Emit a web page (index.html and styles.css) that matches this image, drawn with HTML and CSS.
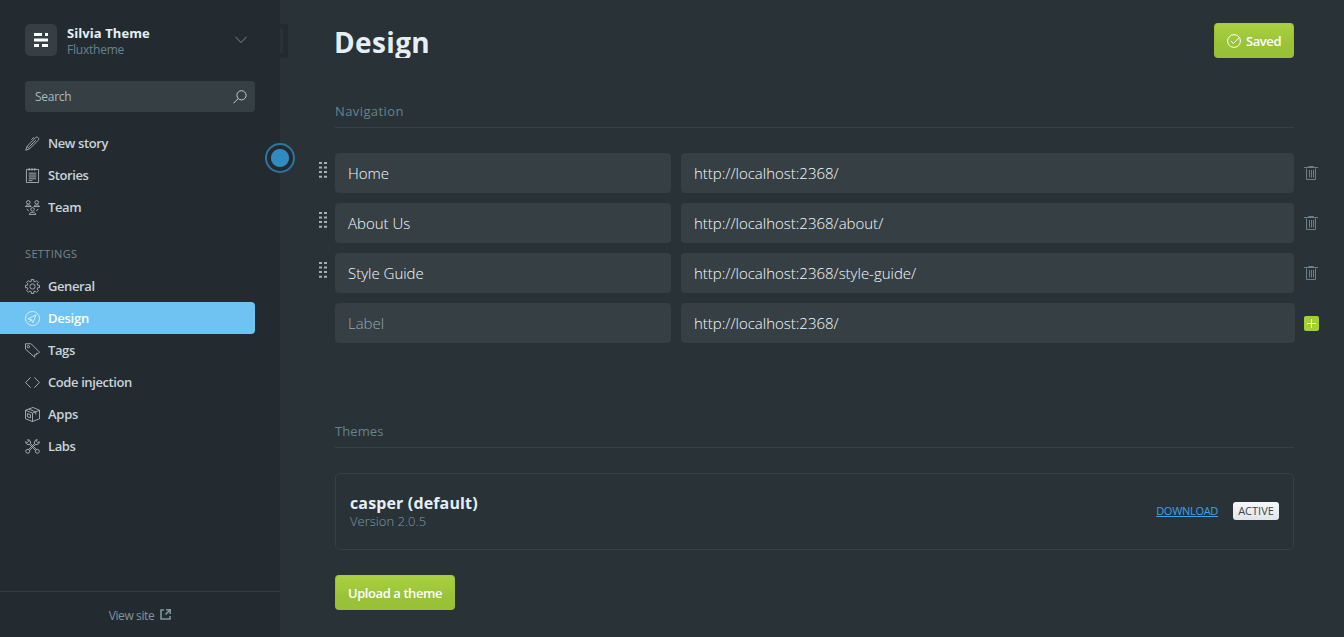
FILE: index.html
```html
<!DOCTYPE html>
<html lang="en">
<head>
<meta charset="utf-8">
<title>Design - Silvia Theme</title>
<link rel="stylesheet" href="styles.css">
</head>
<body>
<svg class="defs" width="0" height="0">
  <symbol id="trash" viewBox="0 0 14 16"><path d="M2.500 3.500V14.500H11.500V3.500M0 2.500H14M4.500 2V1.500H9.500V2M5.500 5V12.500M7.500 5V12.500M9.500 5V12.500"/></symbol>
  <symbol id="grip" viewBox="0 0 9 17"><path d="M0 0h3v2H0zM5 0h3v2H5zM0 4.500h3v2H0zM5 4.500h3v2H5zM0 9h3v2H0zM5 9h3v2H5zM0 13.800h3v2H0zM5 13.800h3v2H5z"/></symbol>
</svg>
<div class="app">
  <aside class="sidebar">
    <header class="account">
      <span class="logo"><svg width="14" height="14" viewBox="0 0 14 14"><path d="M0 0h8v3H0zM11 0h3v3h-3zM0 5.500h14v3H0zM0 11h5v3H0zM8 11h6v3H8z"/></svg></span>
      <div class="who"><div class="blog">Silvia Theme</div><div class="user">Fluxtheme</div></div>
      <svg class="chevron" width="12" height="8" viewBox="0 0 12 8"><path d="M.5 .8L6 6.600L11.500 .8"/></svg>
    </header>
    <div class="search"><span>Search</span><svg width="14" height="14" viewBox="0 0 14 14"><circle cx="8.500" cy="5.300" r="4.600"/><path d="M5.200 8.600L.5 13.300"/></svg></div>
    <nav class="menu">
      <a class="item"><svg class="ico" viewBox="0 0 16 16"><path d="M.8 15.200L2.200 11 11.300 1.700C12 1 13.200 1 14 1.800 14.800 2.600 14.900 3.600 14.200 4.400L5 13.600ZM2.200 11L5 13.600M4.500 11.500L11.500 4.500M7 3.800L9.500 1.300"/></svg><span>New story</span></a>
      <a class="item"><svg class="ico" viewBox="0 0 16 16"><path d="M1.500 1.500H14.500V15.500H1.500ZM4.500 0V3M7.500 0V3M10.500 0V3M4 5.500H12M4 7.500H12M4 9.500H12M4 11.500H12M4 13.500H8"/></svg><span>Stories</span></a>
      <a class="item"><svg class="ico" viewBox="0 0 16 16"><circle cx="3.500" cy="2.500" r="1.900"/><circle cx="12.500" cy="2.500" r="1.900"/><circle cx="8" cy="10" r="1.900"/><path d="M.5 7C.5 4.800 6.500 4.800 6.500 7ZM9.500 7C9.500 4.800 15.500 4.800 15.500 7ZM4.500 15.500C4.500 12.500 11.500 12.500 11.500 15.500ZM2 9.500L4 12M14 9.500L12 12"/></svg><span>Team</span></a>
      <h2 class="group">SETTINGS</h2>
      <a class="item"><svg class="ico" viewBox="0 0 16 16"><circle cx="8" cy="8" r="2.800"/><path d="M6.700 .5H9.300V2.500L10.800 3.100 12.300 1.800 14.200 3.700 12.900 5.200 13.500 6.700H15.500V9.300H13.500L12.900 10.800 14.200 12.300 12.300 14.200 10.800 12.900 9.300 13.500V15.500H6.700V13.500L5.200 12.900 3.700 14.200 1.800 12.300 3.100 10.800 2.500 9.300H.5V6.700H2.500L3.100 5.200 1.800 3.700 3.700 1.800 5.200 3.100 6.700 2.500Z"/></svg><span>General</span></a>
      <a class="item active"><svg class="ico" viewBox="0 0 16 16"><circle cx="8" cy="8" r="7.500"/><path d="M11.800 4L3.200 8.400 6.800 9.200 8.300 12.500ZM6.800 9.200L4.800 11.400"/></svg><span>Design</span></a>
      <a class="item"><svg class="ico" viewBox="0 0 16 16"><path d="M.5 .8L6.500 .8 15.500 9.800 14 11.300 12.500 10.800 12.200 12.600 10.300 12.500 10.300 15.200 .5 6.500Z"/><circle cx="3.600" cy="3.900" r="1.200"/></svg><span>Tags</span></a>
      <a class="item"><svg class="ico" viewBox="0 0 16 16"><path d="M6 2.500L.6 8 6 13.500M10 2.500L15.400 8 10 13.500"/></svg><span>Code injection</span></a>
      <a class="item"><svg class="ico" viewBox="0 0 16 16"><path d="M.5 3.500L8.500 .5 15.500 3.500V12.500L8 15.500.5 12.500ZM.5 3.500L8 6.500 15.500 3.500M8 6.500V15.500M4 2.200L11.500 5.200V8M2.500 7L5.800 8.300V11.500L2.500 10.300Z"/></svg><span>Apps</span></a>
      <a class="item"><svg class="ico" viewBox="0 0 16 16"><path d="M5.800 4.800L12.200 11.200M4.800 5.800L11.200 12.200M10.200 4.800L3.800 11.200M11.200 5.800L4.800 12.200M2.800 .8L4 2.500 2.500 4 .8 2.800C.2 4.600 2.500 6.600 4.800 5.800L5.800 4.800C6.600 2.500 4.600.2 2.800 .8M13.200 .8L12 2.500 13.500 4 15.200 2.800C15.800 4.600 13.500 6.600 11.200 5.800L10.200 4.800C9.400 2.500 11.400.2 13.200 .8"/><circle cx="2.900" cy="13.100" r="2.100"/><circle cx="13.100" cy="13.100" r="2.100"/></svg><span>Labs</span></a>
    </nav>
    <footer class="view"><span>View site</span><svg width="11" height="11" viewBox="0 0 11 11"><path d="M4 1H1V10H10V7"/><path d="M6 .8H10.200V5M10 1L5.500 5.500"/></svg></footer>
    <span class="edge-tab"></span>
    <span class="marker"></span>
  </aside>
  <main class="main">
    <header class="top"><h1>Design</h1><button class="btn saved"><svg width="14" height="14" viewBox="0 0 14 14"><circle cx="7" cy="7" r="6.400"/><path d="M3.800 7L6.400 9.500 12 3.800"/></svg><span>Saved</span></button></header>
    <h3 class="section">Navigation</h3>
    <div class="rows">
      <div class="row"><svg class="grip"><use href="#grip"/></svg><div class="field label">Home</div><div class="field url">http://localhost:2368/</div><svg class="trash"><use href="#trash"/></svg></div>
      <div class="row"><svg class="grip"><use href="#grip"/></svg><div class="field label">About Us</div><div class="field url">http://localhost:2368/about/</div><svg class="trash"><use href="#trash"/></svg></div>
      <div class="row"><svg class="grip"><use href="#grip"/></svg><div class="field label">Style Guide</div><div class="field url">http://localhost:2368/style-guide/</div><svg class="trash"><use href="#trash"/></svg></div>
      <div class="row new"><span class="grip"></span><div class="field label empty">Label</div><div class="field url">http://localhost:2368/</div><span class="add"><svg width="15" height="15" viewBox="0 0 15 15"><path d="M7.500 3V12M3 7.500H12"/></svg></span></div>
    </div>
    <h3 class="section themes">Themes</h3>
    <section class="card">
      <div class="theme"><div class="name">casper (default)</div><div class="version">Version 2.0.5</div></div>
      <a class="download">DOWNLOAD</a><span class="badge">ACTIVE</span>
    </section>
    <button class="btn upload"><span>Upload a theme</span></button>
  </main>
</div>
</body>
</html>
```
FILE: styles.css
```css
* { box-sizing: border-box; }
body { margin: 0; background: #283237; font-family: "Open Sans", "Noto Sans", sans-serif; color: #e5eff5; }
svg { fill: none; stroke: currentColor; flex: none; }
h1, h2, h3 { margin: 0; }
.defs { position: absolute; }
.app { display: flex; height: 637px; overflow: hidden; }

.sidebar { position: relative; display: flex; flex-direction: column; width: 280px; flex: none; background: #232b31; }
.account { display: flex; align-items: center; height: 32px; margin: 24px 33px 0 25px; }
.logo { display: flex; align-items: center; justify-content: center; width: 32px; height: 32px; border-radius: 5px; background: #353f44; }
.logo svg { fill: #fff; stroke: none; }
.who { flex: 1; padding: 3px 0 0 10px; white-space: nowrap; }
.blog { font-size: 13px; line-height: 16px; font-weight: 700; letter-spacing: .08px; }
.user { font-size: 12px; line-height: 17px; color: #66838f; letter-spacing: -.22px; }
.chevron { color: #738a94; }
.search { display: flex; align-items: center; justify-content: space-between; height: 31px; margin: 25px 25px 0; padding: 0 8px 0 10px; border-radius: 4px; background: #353f44; font-size: 12px; color: #a9b9c1; letter-spacing: -.28px; }
.search svg { color: #c0cdd4; }
.menu { margin-top: 15px; }
.item { display: flex; align-items: center; gap: 8px; width: 255px; height: 32px; padding-left: 25px; font-size: 13px; font-weight: 600; color: #c8d3da; letter-spacing: -.4px; }
.item:nth-of-type(8), .active { letter-spacing: -.25px; }
.ico { width: 15px; height: 15px; stroke-width: .9; color: #b4bfc6; }
.active { border-radius: 0 4px 4px 0; background: #6ec3f2; color: #fff; }
.active .ico { color: #e8f6ff; }
.group { height: 47px; padding: 22px 0 0 25px; font-size: 11px; line-height: 18px; font-weight: 400; color: #77858c; letter-spacing: .35px; }
.view { display: flex; align-items: center; justify-content: center; gap: 6px; height: 46px; padding-top: 2px; margin-top: auto; border-top: 1px solid #303d44; font-size: 12px; font-weight: 400; color: #7f959f; letter-spacing: -.4px; }
.view svg { stroke-width: 1.600; margin-top: -3px; }
.edge-tab { position: absolute; left: 280px; top: 24px; width: 8px; height: 34px; border: solid #232b31; border-width: 5px 5px 5px 0; border-radius: 0 3px 3px 0; }
.marker { position: absolute; left: 265px; top: 143px; width: 30px; height: 30px; border: 2px solid #2f769e; border-radius: 50%; background: radial-gradient(circle, #318bbf 0 8.500px, #222b31 9.500px); }

.main { width: 1014px; padding: 23px 0 0 55px; }
.top { display: flex; justify-content: space-between; height: 35px; }
h1 { font-size: 28px; line-height: 39px; font-weight: 700; height: 35px; overflow: hidden; letter-spacing: .35px; margin-left: -1px; }
.btn { display: flex; align-items: center; justify-content: center; height: 35px; padding: 0; border: 1px solid #9abf35; border-top-color: #a6ce3d; border-radius: 4px; background: linear-gradient(#a9d140, #9ac338 60%, #99c137); font: 600 13px "Open Sans", sans-serif; color: #fff; }
.saved { width: 80px; gap: 5px; letter-spacing: -.4px; }
.section { height: 28px; margin-top: 42px; border-bottom: 1px solid #364248; font-size: 13px; line-height: 22px; font-weight: 400; color: #668490; letter-spacing: .4px; }
.section.themes { letter-spacing: .1px; }
.rows { display: flex; flex-direction: column; gap: 10px; margin: 25px -26px 0 -16px; }
.row { display: flex; align-items: center; height: 40px; }
.grip { width: 9px; height: 17px; margin: -5px 7px 0 0; fill: #a5b1b7; stroke: none; }
.field { height: 40px; padding-left: 13px; border-radius: 4px; background: #353f44; font-size: 15px; line-height: 40px; font-weight: 300; color: #f6fbff; white-space: nowrap; letter-spacing: -.01px; }
.label { width: 336px; margin-right: 10px; }
.url { width: 613px; }
.new .url { width: 614px; }
.empty { color: #98a7af; }
.trash { width: 14px; height: 16px; margin: 0 0 0 10px; color: #6d7f88; }
.add { display: flex; width: 15px; height: 15px; margin: 0 0 0 9px; border-radius: 2px; background: #a4d037; color: #fff; }
.themes { margin-top: 77px; }
.card { display: flex; align-items: center; height: 77px; margin-top: 25px; padding: 0 14px; border: 1px solid #354147; border-radius: 5px; }
.theme { flex: 1; padding-top: 1px; }
.name { font-size: 16px; line-height: 19px; font-weight: 700; letter-spacing: .14px; }
.version { font-size: 13px; line-height: 17px; font-weight: 300; color: #7f9ba7; letter-spacing: .02px; }
.download { font-size: 11px; font-weight: 400; color: #3fa3e4; text-decoration: underline; letter-spacing: -.3px; margin-top: -2px; }
.badge { width: 46px; height: 18px; margin: -2px 0 0 15px; border-radius: 3px; background: linear-gradient(#f6f7f8, #e1e6e9); font-size: 11px; line-height: 18px; color: #39454d; text-align: center; }
.upload { width: 120px; margin-top: 25px; letter-spacing: -.42px; }
```
